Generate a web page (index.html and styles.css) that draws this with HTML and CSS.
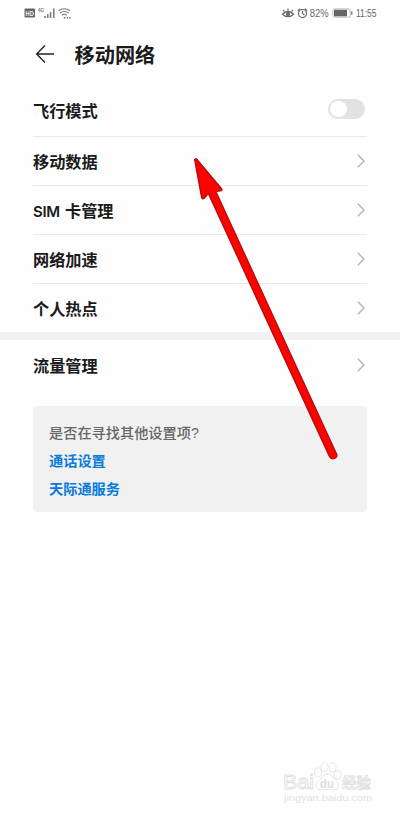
FILE: index.html
```html
<!DOCTYPE html>
<html lang="zh-CN">
<head>
<meta charset="utf-8">
<title>移动网络</title>
<link rel="stylesheet" href="styles.css">
</head>
<body>
<main class="screen">
  <div class="status">
    <svg class="status-left" width="50" height="16" viewBox="0 0 50 16">
      <rect x="0.5" y="3.5" width="10.500" height="9" rx="1" fill="#666"/>
      <text class="hd" x="1.6" y="10.5" textLength="8.2" lengthAdjust="spacingAndGlyphs">HD</text>
      <text class="gen" x="14" y="7" textLength="6" lengthAdjust="spacingAndGlyphs">4G</text>
      <path d="M21 11v2M23.800 9.200v3.800M26.600 7v6M29.800 3.500v9.500" stroke="#777" stroke-width="1.5" fill="none"/>
      <path d="M34.5 5.7q5.7-4 11.5 0M36 8q4.3-3 8.6 0M37.8 10.3q2.6-2 5 0" stroke="#777" stroke-width="1.1" fill="none"/>
      <path d="M39.8 12.1h1.6v1.4h-1.6zM42.8 12h1.3v1.4h-1.3zM45.3 12h1.3v1.4h-1.3z" fill="#777"/>
    </svg>
    <svg class="status-right" width="98" height="16" viewBox="0 0 98 16">
      <g fill="none" stroke="#666" stroke-width="1.2">
        <path d="M1.4 9.2Q7 3.8 12.6 9.2Q7 14.2 1.4 9.2Z"/>
        <path d="M7 5.8V3.500M3.4 6.7L2 4.900M10.6 6.7L12 4.900"/>
        <circle cx="21.5" cy="8.500" r="4"/>
        <path d="M21.5 5.8V8.7L23.5 9.900M16.8 5.8l2.4-2.2M23.8 3.6l2.4 2.2"/>
      </g>
      <circle cx="7" cy="9.1" r="2.1" fill="#666"/>
      <text x="28.7" y="12.300" textLength="18.800" lengthAdjust="spacingAndGlyphs">82%</text>
      <rect x="52" y="3.9" width="17.2" height="8.3" rx="1.5" fill="none" stroke="#aaa" stroke-width=".8"/>
      <rect x="53" y="4.8" width="13" height="6.5" fill="#666"/>
      <path d="M70.8 6.200v3.5" stroke="#777" stroke-width="1.3"/>
      <text class="time" x="75" y="12.300" textLength="20.500" lengthAdjust="spacingAndGlyphs">11:55</text>
    </svg>
  </div>
  <header class="header">
    <svg width="20" height="20" viewBox="0 0 20 20"><path d="M19 10H2M10 1.4L1.6 10L10 18.6" fill="none" stroke="#222" stroke-width="1.4"/></svg>
    <h1>移动网络</h1>
  </header>
  <section class="list">
    <div class="row"><span>飞行模式</span><i class="switch"></i></div>
    <div class="row"><span>移动数据</span><svg class="chevron" viewBox="0 0 8 14"><path d="M.8 .8L7 7L.8 13.2"/></svg></div>
    <div class="row"><span><b class="sim">SIM</b>卡管理</span><svg class="chevron" viewBox="0 0 8 14"><path d="M.8 .8L7 7L.8 13.2"/></svg></div>
    <div class="row"><span>网络加速</span><svg class="chevron" viewBox="0 0 8 14"><path d="M.8 .8L7 7L.8 13.2"/></svg></div>
    <div class="row"><span>个人热点</span><svg class="chevron" viewBox="0 0 8 14"><path d="M.8 .8L7 7L.8 13.2"/></svg></div>
  </section>
  <div class="band"></div>
  <section class="list second">
    <div class="row"><span>流量管理</span><svg class="chevron" viewBox="0 0 8 14"><path d="M.8 .8L7 7L.8 13.2"/></svg></div>
  </section>
  <aside class="card">
    <p>是否在寻找其他设置项<span class="question">?</span></p>
    <a>通话设置</a>
    <a>天际通服务</a>
  </aside>
  <svg class="arrow" width="150" height="308" viewBox="0 0 150 308">
    <path d="M4.600 4.600Q5.300 2.700 7 4.300L31.800 34Q32.500 36 30.500 36L25.800 36.300L146.500 298.800Q148 302 144.500 303.500Q141.300 304.800 139.500 301.800L18.400 38.700L14 43.500Q12 44.700 11.500 42.200Z" fill="#f80500" stroke="#b00a0a" stroke-width="1.2" stroke-linejoin="round"/>
  </svg>
  <svg class="watermark" width="96" height="46" viewBox="0 0 96 46">
    <g fill="#fff" stroke="#dedede" stroke-width=".8">
      <text class="brand" x="1" y="28" textLength="31" lengthAdjust="spacingAndGlyphs">Bai</text>
      <ellipse cx="36" cy="11.500" rx="3.500" ry="4.500"/>
      <ellipse cx="42.500" cy="6" rx="3.500" ry="4.700"/>
      <ellipse cx="50.500" cy="6.500" rx="3.500" ry="4.700"/>
      <ellipse cx="55.500" cy="14" rx="3.500" ry="4.300"/>
      <path d="M45 13C40 13 40 18 36 20.500C32 24 34 29 39 29Q45 28 51 29C58 29 58 23 54 20C51 17 50 13 45 13Z"/>
      <text class="cn" x="60" y="27" textLength="29" lengthAdjust="spacingAndGlyphs">经验</text>
    </g>
    <text class="du" x="38" y="26.500" textLength="14" lengthAdjust="spacingAndGlyphs">du</text>
    <text class="site" x="2" y="39.500" textLength="88" lengthAdjust="spacingAndGlyphs">jingyan.baidu.com</text>
  </svg>
</main>
</body>
</html>
```
FILE: styles.css
```css
* { box-sizing: border-box; }
body {
  margin: 0;
  background: #fefefe;
  color: #1b1b1b;
  font-family: "Noto Sans CJK SC", "Liberation Sans", sans-serif;
}
.screen { position: relative; width: 400px; height: 816px; overflow: hidden; }
.status {
  display: flex;
  justify-content: space-between;
  height: 26px;
  padding: 5px 21px 0 24px;
}
.status svg { overflow: visible; }
.status text { font: 11px "Liberation Sans", sans-serif; fill: #666; }
.status .time { font-size: 10px; }
.status .hd { font-size: 6.500px; font-weight: bold; fill: #eee; }
.status .gen { font-size: 6px; font-weight: bold; fill: #777; }
.header { display: flex; align-items: center; height: 61px; padding: 0 35px 6px; gap: 20px; }
h1 { margin: 2px 0 0 -.5px; font-size: 20.200px; line-height: 28px; font-weight: 700; }
.list { padding: 0 33px; }
.row {
  display: flex;
  align-items: center;
  justify-content: space-between;
  height: 49px;
  border-bottom: 1px solid #e9e9e9;
  font-size: 16.200px;
  line-height: 24px;
  font-weight: 700;
}
.row:first-child { height: 50px; }
.list:not(.second) .row:first-child { padding-bottom: 3px; }
.row:last-child { border-bottom: 0; height: 48px; }
.sim { display: inline-block; width: 32px; font-family: Inter, "Liberation Sans", sans-serif; font-size: 15px; font-weight: 600; letter-spacing: -.3px; line-height: 20px; }
.chevron { width: 8px; height: 14px; margin-right: 2px; }
.chevron path { fill: none; stroke: #b4b4b4; stroke-width: 1.400; }
.switch {
  display: flex;
  width: 37px;
  height: 20px;
  padding: 2px;
  margin: 0 2px 2px 0;
  border-radius: 10px;
  background: #e2e2e2;
}
.switch::before { content: ""; width: 17px; height: 16px; border-radius: 50%; background: #fff; }
.band { height: 8px; background: #f1f1f1; }
.second { height: 66px; padding-top: 1px; }
.card {
  width: 334px;
  height: 106px;
  margin-left: 33px;
  padding: 13px 16px;
  border-radius: 5px;
  background: #f1f1f1;
  font-size: 14.200px;
  line-height: 27px;
  font-weight: 500;
}
.card p { margin: 0; color: #666; }
.question { font-family: "Liberation Sans", sans-serif; }
.card a { display: block; height: 27.500px; color: #087bdc; font-weight: 700; }
.arrow { position: absolute; left: 190px; top: 155px; }
.watermark { position: absolute; left: 282px; top: 761px; }
.brand { font: 21px "Liberation Sans", sans-serif; }
.cn { font-size: 15px; font-weight: 500; }
.du { font: bold 13px "Liberation Sans", sans-serif; fill: #dedede; }
.site { font: 9.500px "Liberation Sans", sans-serif; fill: #e2e2e2; }
```
